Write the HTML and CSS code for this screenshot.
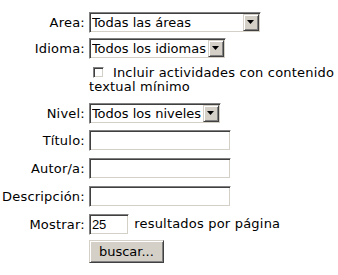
FILE: index.html
```html
<!DOCTYPE html>
<html>
<head>
    <meta charset="UTF-8">
    <title>Buscar actividades</title>
    <link rel="stylesheet" href="styles.css">
</head>
<body>
    <form class="buscador">
        <table class="campos">
            <tr class="fila-combo">
                <td class="etiqueta"><label for="area">Area:</label></td>
                <td>
                    <span class="combo combo-area">
                        <select id="area" name="area"><option>Todas las áreas</option></select>
                        <span class="flecha"><svg width="7" height="4" viewBox="0 0 7 4"><path d="M0 0h7L3.5 4z" fill="#000"/></svg></span>
                    </span>
                </td>
            </tr>
            <tr class="fila-combo">
                <td class="etiqueta"><label for="idioma">Idioma:</label></td>
                <td>
                    <span class="combo combo-idioma">
                        <select id="idioma" name="idioma"><option>Todos los idiomas</option></select>
                        <span class="flecha"><svg width="7" height="4" viewBox="0 0 7 4"><path d="M0 0h7L3.5 4z" fill="#000"/></svg></span>
                    </span>
                </td>
            </tr>
            <tr class="fila-check">
                <td></td>
                <td>
                    <label class="check"><span class="caja"></span>Incluir actividades con contenido textual mínimo</label>
                </td>
            </tr>
            <tr class="fila-combo">
                <td class="etiqueta"><label for="nivel">Nivel:</label></td>
                <td>
                    <span class="combo combo-nivel">
                        <select id="nivel" name="nivel"><option>Todos los niveles</option></select>
                        <span class="flecha"><svg width="7" height="4" viewBox="0 0 7 4"><path d="M0 0h7L3.5 4z" fill="#000"/></svg></span>
                    </span>
                </td>
            </tr>
            <tr class="fila-texto">
                <td class="etiqueta"><label for="titulo">Título:</label></td>
                <td><input class="texto" type="text" id="titulo" name="titulo"></td>
            </tr>
            <tr class="fila-texto">
                <td class="etiqueta"><label for="autor">Autor/a:</label></td>
                <td><input class="texto" type="text" id="autor" name="autor"></td>
            </tr>
            <tr class="fila-texto">
                <td class="etiqueta"><label for="descripcion">Descripción:</label></td>
                <td><input class="texto" type="text" id="descripcion" name="descripcion"></td>
            </tr>
            <tr class="fila-texto">
                <td class="etiqueta"><label for="mostrar">Mostrar:</label></td>
                <td class="mostrar"><input class="texto corto" type="text" id="mostrar" name="mostrar" value="25"> resultados por página</td>
            </tr>
            <tr>
                <td></td>
                <td><button type="button" class="boton">buscar...</button></td>
            </tr>
        </table>
    </form>
</body>
</html>
```

FILE: styles.css
```css
body {
    margin: 0;
    background-color: #ffffff;
    font-family: "DejaVu Sans", Verdana, sans-serif;
    font-size: 13px;
    color: #000000;
}
.buscador {
    padding: 9px 0 0 2px;
}
.campos {
    border-collapse: collapse;
}
.campos td {
    padding: 0;
    vertical-align: middle;
}
.etiqueta {
    text-align: right;
    padding-right: 4px !important;
    white-space: nowrap;
    letter-spacing: 0.2px;
}
.fila-combo td {
    height: 26px;
}
.fila-texto td {
    height: 28px;
}
.combo {
    display: inline-flex;
    align-items: center;
    height: 21px;
    box-sizing: border-box;
    border: 1px solid;
    border-color: #808080 #ffffff #ffffff #808080;
    box-shadow: inset 1px 1px #404040, inset -1px -1px #d4d0c8;
    padding: 1px;
    background: #ffffff;
    vertical-align: middle;
}
.combo select {
    appearance: none;
    -webkit-appearance: none;
    border: none;
    background: transparent;
    font: inherit;
    color: #000000;
    padding: 0 0 0 1px;
    margin: 0;
    flex: 1;
    min-width: 0;
    height: 17px;
    outline: none;
}
.combo-area { width: 172px; }
.combo-idioma { width: 137px; }
.combo-nivel { width: 132px; }
.flecha {
    display: flex;
    align-items: center;
    justify-content: center;
    flex: none;
    width: 16px;
    height: 17px;
    box-sizing: border-box;
    background: #d4d0c8;
    border: 1px solid;
    border-color: #d4d0c8 #404040 #404040 #d4d0c8;
    box-shadow: inset 1px 1px #ffffff, inset -1px -1px #808080;
}
.check {
    display: block;
    width: 250px;
    line-height: 14px;
    padding: 5px 0 6px 0;
    letter-spacing: 0.2px;
}
.caja {
    display: inline-block;
    width: 11px;
    height: 11px;
    box-sizing: border-box;
    margin: 0 9px 0 4px;
    border: 1px solid;
    border-color: #808080 #ffffff #ffffff #808080;
    box-shadow: inset 1px 1px #404040, inset -1px -1px #d4d0c8;
    vertical-align: -1px;
}
.texto {
    width: 142px;
    height: 21px;
    box-sizing: border-box;
    margin: 0;
    padding: 1px 2px;
    font: inherit;
    border: 1px solid;
    border-color: #808080 #ffffff #ffffff #808080;
    box-shadow: inset 1px 1px #404040, inset -1px -1px #d4d0c8;
    vertical-align: middle;
}
.mostrar {
    letter-spacing: 0.2px;
}
.corto {
    width: 40px;
    margin-right: 1px;
    font-family: "Liberation Sans", Arial, sans-serif;
    letter-spacing: 0;
}
.boton {
    width: 75px;
    height: 23px;
    margin-top: 2px;
    font: inherit;
    color: #000000;
    background: #d4d0c8;
    border: 1px solid;
    border-color: #d4d0c8 #404040 #404040 #d4d0c8;
    box-shadow: inset 1px 1px #ffffff, inset -1px -1px #808080;
    padding: 0;
}
```
